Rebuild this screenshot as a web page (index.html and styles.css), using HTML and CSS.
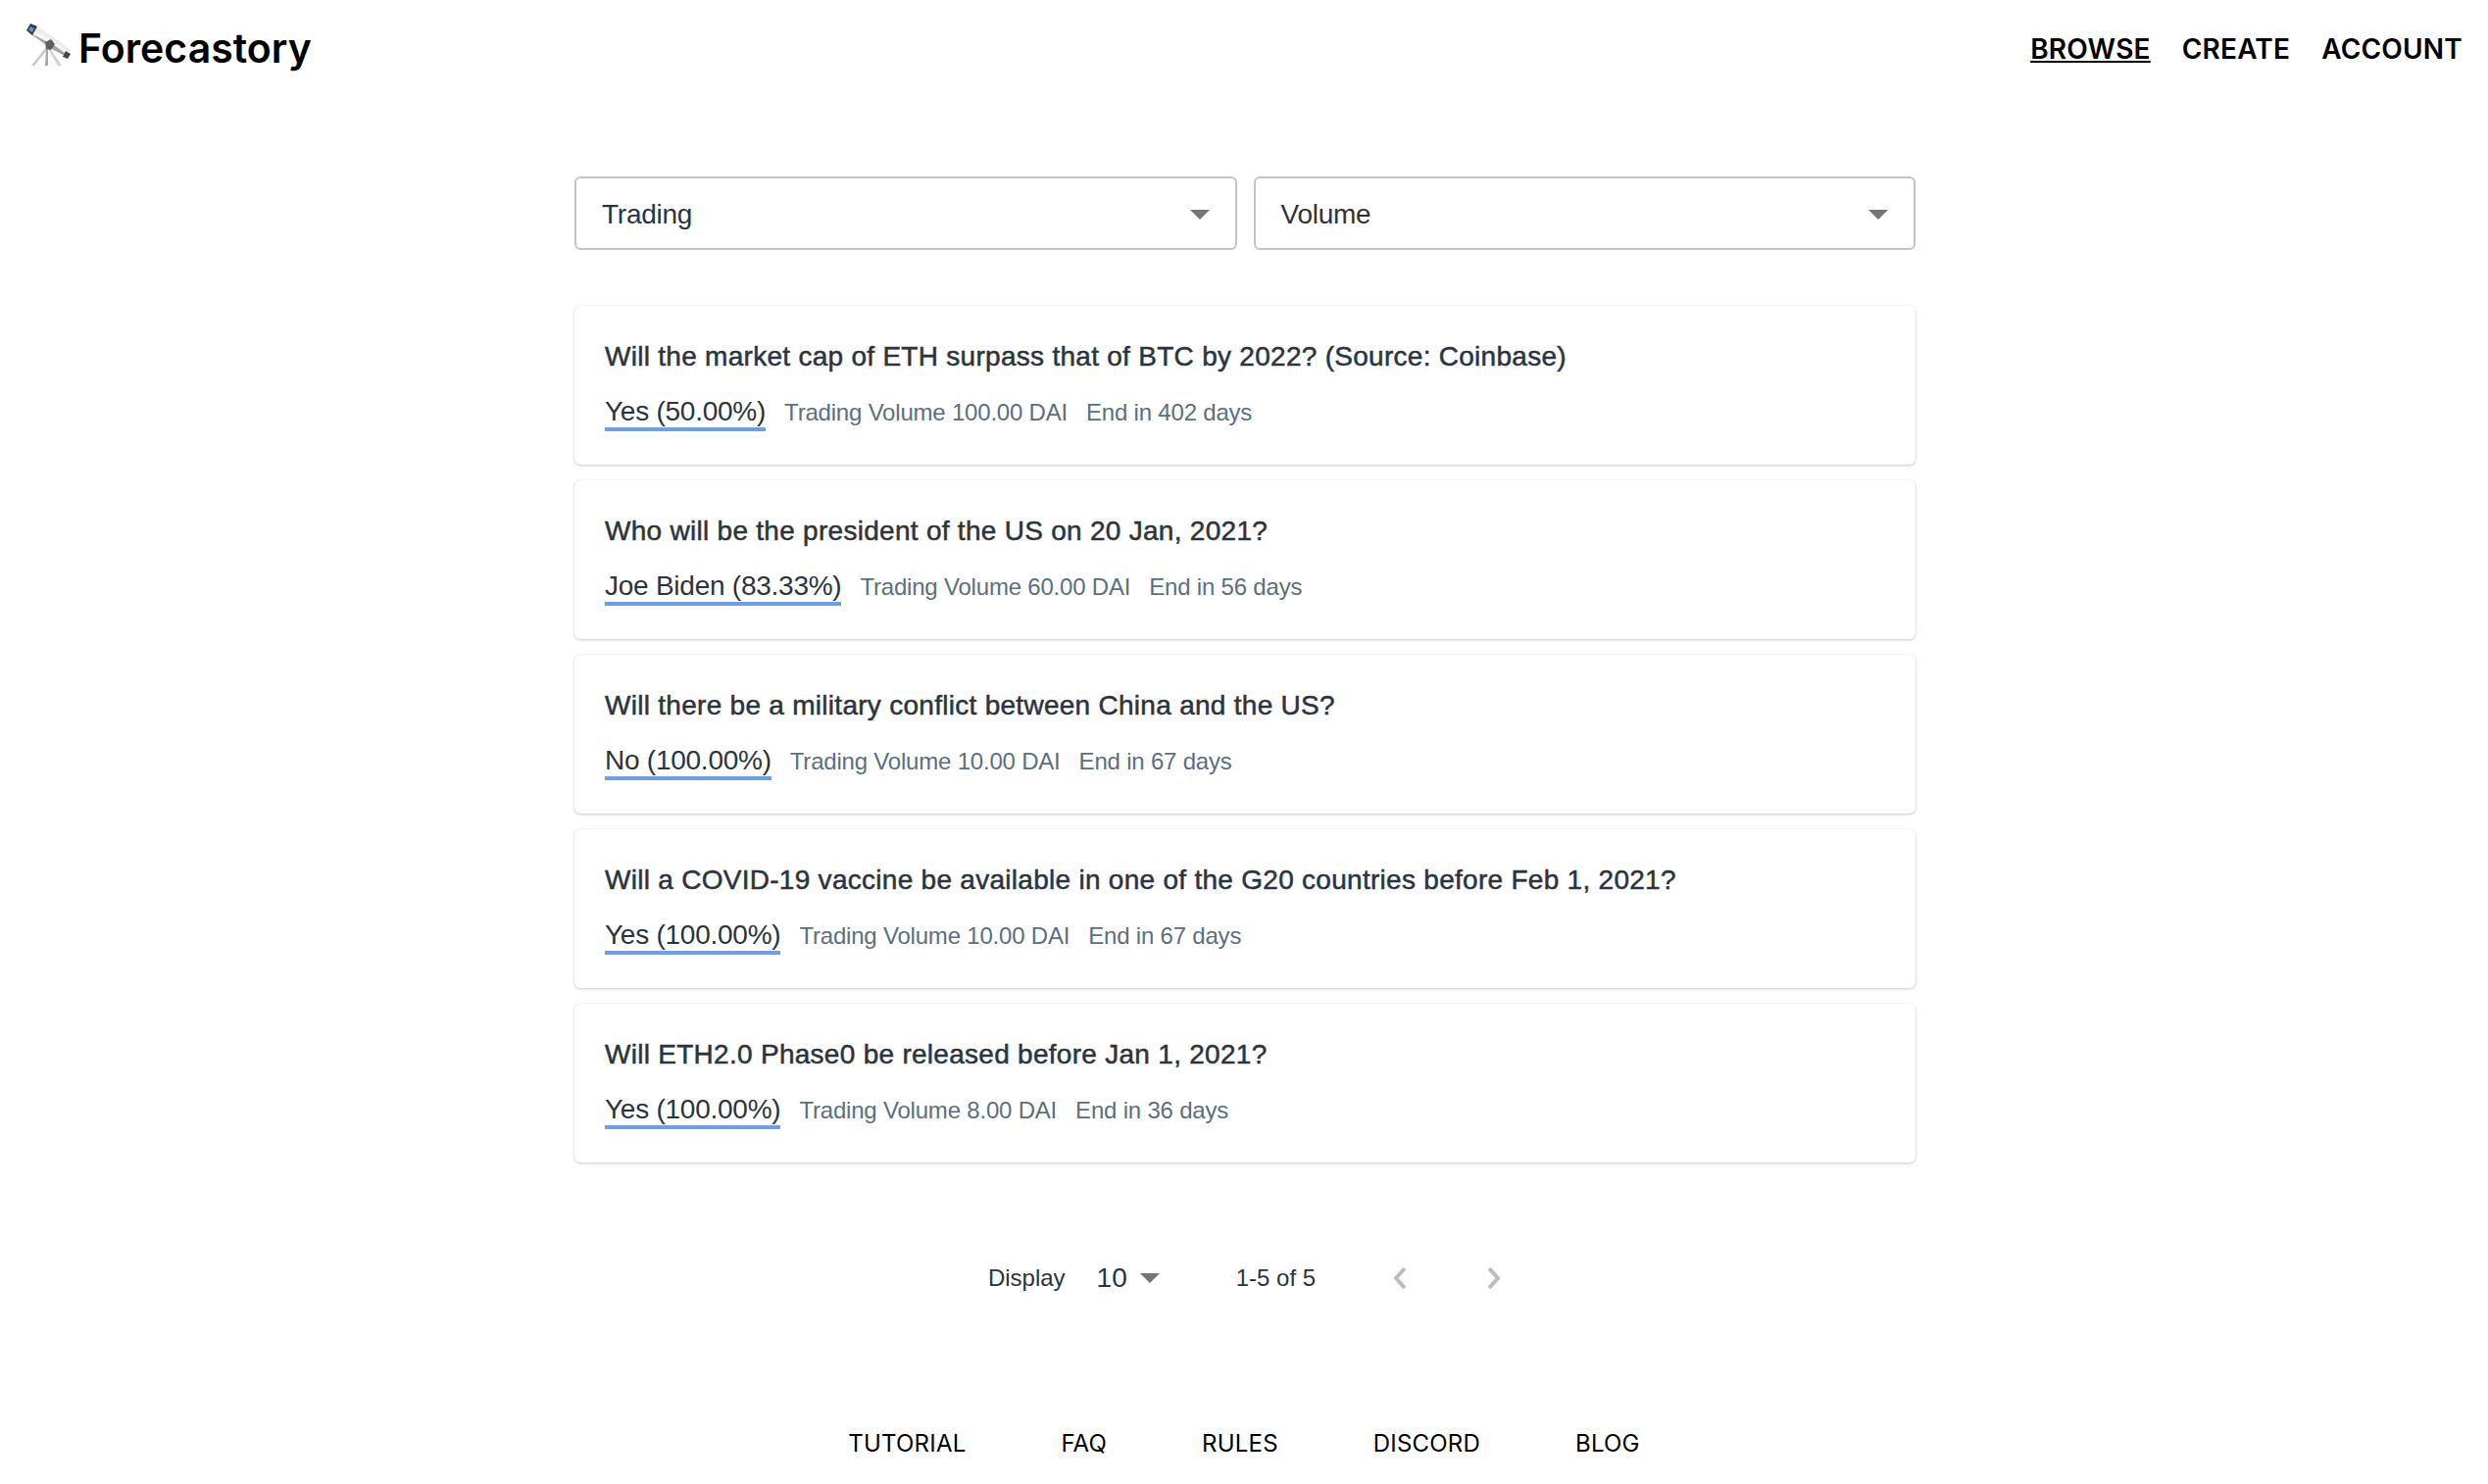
FILE: index.html

```html
<!DOCTYPE html>
<html>
<head>
<meta charset="UTF-8">
<title>Forecastory</title>
<link rel="stylesheet" href="styles.css">
</head>
<body>
  <header class="topbar">
    <a class="brand" href="#">
      <svg class="brand-icon" viewBox="0 0 46 44" width="46" height="44">
        <path d="M20 24 L5 43 L8 43 L21 27 Z" fill="#c9c9c9"/>
        <path d="M20 24 L19 43 L22 43 L22 24 Z" fill="#a9a9a9"/>
        <path d="M21 24 L32 43 L36 43 L23 24 Z" fill="#d2d2d2"/>
        <path d="M8 1 L2 9 L26 26 L45 30 L45 27 L32 17 Z" fill="#ececec"/>
        <path d="M3 8 L26 24 L44 32 L45 29 L30 20 L5 5 Z" fill="#f7f7f7"/>
        <path d="M2 9 L26 26 L41 34 L43 33 L28 22 Z" fill="#a4a4a4"/>
        <path d="M4 0 L0 7 L6 12 L11 3 Z" fill="#343a46"/>
        <path d="M4 3 L2 7 L6 9 L8 5 Z" fill="#5c8fdc"/>
        <path d="M40 28 L37 34 L42 36 L45 31 Z" fill="#474747"/>
        <path d="M19 19 L25 16 L29 21 L25 27 L20 26 Z" fill="#5f5f5f"/>
      </svg>
      <span>Forecastory</span>
    </a>
    <nav class="topnav">
      <a class="active" href="#">BROWSE</a>
      <a href="#">CREATE</a>
      <a href="#">ACCOUNT</a>
    </nav>
  </header>

  <main class="content">
    <div class="filters">
      <div class="select"><span>Trading</span><i class="caret"></i></div>
      <div class="select"><span>Volume</span><i class="caret"></i></div>
    </div>

    <div class="market-list">
      <div class="card">
        <div class="question">Will the market cap of ETH surpass that of BTC by 2022? (Source: Coinbase)</div>
        <div class="meta">
          <span class="lead">Yes (50.00%)</span>
          <span>Trading Volume 100.00 DAI</span>
          <span>End in 402 days</span>
        </div>
      </div>
      <div class="card">
        <div class="question">Who will be the president of the US on 20 Jan, 2021?</div>
        <div class="meta">
          <span class="lead">Joe Biden (83.33%)</span>
          <span>Trading Volume 60.00 DAI</span>
          <span>End in 56 days</span>
        </div>
      </div>
      <div class="card">
        <div class="question">Will there be a military conflict between China and the US?</div>
        <div class="meta">
          <span class="lead">No (100.00%)</span>
          <span>Trading Volume 10.00 DAI</span>
          <span>End in 67 days</span>
        </div>
      </div>
      <div class="card">
        <div class="question">Will a COVID-19 vaccine be available in one of the G20 countries before Feb 1, 2021?</div>
        <div class="meta">
          <span class="lead">Yes (100.00%)</span>
          <span>Trading Volume 10.00 DAI</span>
          <span>End in 67 days</span>
        </div>
      </div>
      <div class="card">
        <div class="question">Will ETH2.0 Phase0 be released before Jan 1, 2021?</div>
        <div class="meta">
          <span class="lead">Yes (100.00%)</span>
          <span>Trading Volume 8.00 DAI</span>
          <span>End in 36 days</span>
        </div>
      </div>
    </div>

    <div class="pager">
      <span class="pager-label">Display</span>
      <span class="pager-size">10<i class="caret"></i></span>
      <span class="pager-range">1-5 of 5</span>
      <svg class="chevron" viewBox="0 0 16 26" width="16" height="26"><path d="M13 3 L4 13 L13 23" fill="none" stroke="#bdbdbd" stroke-width="4"/></svg>
      <svg class="chevron" viewBox="0 0 16 26" width="16" height="26"><path d="M3 3 L12 13 L3 23" fill="none" stroke="#bdbdbd" stroke-width="4"/></svg>
    </div>
  </main>

  <footer class="footer">
    <a href="#">TUTORIAL</a>
    <a href="#">FAQ</a>
    <a href="#">RULES</a>
    <a href="#">DISCORD</a>
    <a href="#">BLOG</a>
  </footer>
</body>
</html>
```

FILE: styles.css

```css
html, body {
  margin: 0;
  padding: 0;
  background: #fff;
}

body {
  font-family: "Liberation Sans", Arial, sans-serif;
  color: #2b343d;
  height: 1514px;
  overflow: hidden;
}

a {
  color: inherit;
  text-decoration: none;
}

.topbar {
  display: flex;
  justify-content: space-between;
  align-items: center;
  height: 100px;
  padding: 0 26px 0 27px;
}

.brand {
  display: flex;
  align-items: center;
  gap: 7px;
  margin-bottom: 3px;
  font-family: Inter, sans-serif;
  font-size: 41px;
  font-weight: 600;
  color: #000;
}

.brand-icon {
  margin-bottom: 5px;
}

.topnav {
  display: flex;
  gap: 32px;
  font-family: Inter, sans-serif;
  font-size: 28px;
  font-weight: 600;
  letter-spacing: 0.2px;
  color: #000;
}

.topnav .active {
  text-decoration: underline;
}

.content {
  width: 1368px;
  margin: 0 0 0 586px;
}

.filters {
  display: flex;
  gap: 17px;
  margin-top: 80px;
}

.select {
  flex: 1;
  height: 75px;
  box-sizing: border-box;
  display: flex;
  justify-content: space-between;
  align-items: center;
  padding: 2px 26px 0;
  border: 2px solid #c4c4c4;
  border-radius: 6px;
  font-size: 28px;
  letter-spacing: -0.25px;
}

.caret {
  display: inline-block;
  width: 0;
  height: 0;
  border-left: 10px solid transparent;
  border-right: 10px solid transparent;
  border-top: 10px solid #757575;
}

.market-list {
  display: flex;
  flex-direction: column;
  gap: 16px;
  margin-top: 57px;
}

.card {
  height: 162px;
  box-sizing: border-box;
  padding: 34px 30px 0 31px;
  background: #fff;
  border-radius: 6px;
  box-shadow: 0 1px 3px rgba(0, 0, 0, 0.2), 0 0 1px rgba(0, 0, 0, 0.12);
}

.question {
  font-size: 28px;
  line-height: 36px;
  letter-spacing: 0.28px;
  -webkit-text-stroke: 0.5px #2b343d;
}

.meta {
  display: flex;
  align-items: baseline;
  gap: 19px;
  margin-top: 22px;
  font-size: 24px;
  letter-spacing: -0.2px;
  color: #5b6f80;
}

.lead {
  font-size: 28px;
  letter-spacing: -0.25px;
  color: #2b343d;
  border-bottom: 4px solid #6d9eeb;
  line-height: 32px;
}

.pager {
  display: flex;
  align-items: center;
  justify-content: center;
  margin-top: 102px;
  font-size: 24px;
}

.pager-size {
  display: flex;
  align-items: center;
  gap: 13px;
  margin-left: 32px;
  font-size: 28px;
}

.pager-range {
  margin: 0 78px 0 78px;
}

.chevron + .chevron {
  margin-left: 80px;
}

.footer {
  display: flex;
  justify-content: center;
  gap: 97px;
  margin-top: 138px;
  font-family: Inter, sans-serif;
  font-size: 24px;
  letter-spacing: 0.2px;
  color: #000;
}
```
